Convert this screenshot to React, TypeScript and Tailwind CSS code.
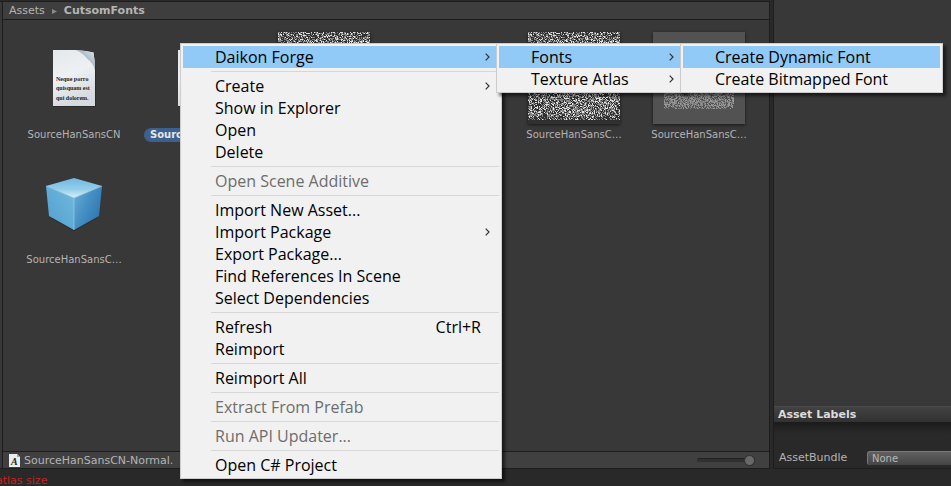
import type { ReactNode } from "react";

type MenuEntry =
  | { label: string; shortcut?: string; submenu?: boolean; disabled?: boolean; active?: boolean }
  | "separator";

const assetMenu: MenuEntry[] = [
  { label: "Daikon Forge", submenu: true, active: true },
  "separator",
  { label: "Create", submenu: true },
  { label: "Show in Explorer" },
  { label: "Open" },
  { label: "Delete" },
  "separator",
  { label: "Open Scene Additive", disabled: true },
  "separator",
  { label: "Import New Asset..." },
  { label: "Import Package", submenu: true },
  { label: "Export Package..." },
  { label: "Find References In Scene" },
  { label: "Select Dependencies" },
  "separator",
  { label: "Refresh", shortcut: "Ctrl+R" },
  { label: "Reimport" },
  "separator",
  { label: "Reimport All" },
  "separator",
  { label: "Extract From Prefab", disabled: true },
  "separator",
  { label: "Run API Updater...", disabled: true },
  "separator",
  { label: "Open C# Project" },
];

const forgeMenu: MenuEntry[] = [
  { label: "Fonts", submenu: true, active: true },
  { label: "Texture Atlas", submenu: true },
];

const fontsMenu: MenuEntry[] = [
  { label: "Create Dynamic Font", active: true },
  { label: "Create Bitmapped Font" },
];

function Chevron() {
  return (
    <svg width="5" height="8" viewBox="0 0 5 8" className="mr-[9px] shrink-0" aria-hidden="true">
      <path d="M0.7 0.7 L4 4 L0.7 7.3" fill="none" stroke="#333" strokeWidth="1.2" />
    </svg>
  );
}

function Menu({ entries, className, name }: { entries: MenuEntry[]; className: string; name: string }) {
  return (
    <div
      role="menu"
      aria-label={name}
      className={`absolute border border-[#cccccc] bg-[#f1f1f1] p-0.5 font-['Open_Sans','Noto_Sans_CJK_SC',sans-serif] text-[16px] text-black shadow-[3px_3px_3px_rgba(0,0,0,0.55)] ${className}`}
    >
      {entries.map((entry, i) =>
        entry === "separator" ? (
          <div key={i} role="separator" className="ml-7 flex h-[7px] items-center">
            <div className="h-px w-full bg-[#d7d7d7]" />
          </div>
        ) : (
          <button
            key={i}
            role="menuitem"
            disabled={entry.disabled}
            className={`flex h-[22px] w-full items-center pl-8 text-left leading-[22px] whitespace-nowrap ${
              entry.active ? "bg-[#91c9f7]" : ""
            } ${entry.disabled ? "text-[#6d6d6d]" : ""}`}
          >
            <span className="flex-1">{entry.label}</span>
            {entry.shortcut && <span className="pr-[18px]">{entry.shortcut}</span>}
            {entry.submenu && <Chevron />}
          </button>
        ),
      )}
    </div>
  );
}

// Glyph atlas preview: seeded speckle so every render is identical.
function specklePath(x0: number, y0: number, x1: number, y1: number, density: number, seed: number) {
  let s = seed;
  let d = "";
  for (let y = y0; y < y1; y++) {
    for (let x = x0; x < x1; x++) {
      s = (s * 1664525 + 1013904223) >>> 0;
      const ragged = y > y1 - 4 && (x * 7 + y * 3) % 11 < 3;
      if (s / 4294967296 < density && !ragged) d += `M${x} ${y}h1v1h-1z`;
    }
  }
  return d;
}

const denseWhite = specklePath(0, 0, 92, 88, 0.2, 11);
const denseGray = specklePath(0, 0, 92, 88, 0.5, 77);
const faintLight = specklePath(11, 12, 81, 77, 0.3, 5);
const faintGray = specklePath(11, 12, 81, 77, 0.6, 29);

function AtlasThumb() {
  return (
    <svg width="92" height="92" viewBox="0 0 92 92" shapeRendering="crispEdges" className="bg-[#303030] shadow-[0_1px_3px_rgba(0,0,0,0.6)]" aria-hidden="true">
      <path d={denseGray} fill="#858585" />
      <path d={denseWhite} fill="#e2e2e2" />
    </svg>
  );
}

function FaintThumb() {
  return (
    <svg width="92" height="92" viewBox="0 0 92 92" shapeRendering="crispEdges" className="bg-[#525252] shadow-[0_1px_3px_rgba(0,0,0,0.6)]" aria-hidden="true">
      <path d={faintGray} fill="#7d7d7d" />
      <path d={faintLight} fill="#999999" />
    </svg>
  );
}

function DocumentThumb() {
  return (
    <svg width="44" height="58" viewBox="0 0 44 58" aria-hidden="true">
      <defs>
        <linearGradient id="paper" x1="0" y1="0" x2="0.3" y2="1">
          <stop offset="0" stopColor="#e3e8ec" />
          <stop offset="0.5" stopColor="#eef1f3" />
          <stop offset="1" stopColor="#d5dade" />
        </linearGradient>
        <linearGradient id="curl" x1="0" y1="1" x2="1" y2="0">
          <stop offset="0.2" stopColor="#e3e8ec" />
          <stop offset="0.55" stopColor="#a9b8c3" />
          <stop offset="1" stopColor="#e4ebef" />
        </linearGradient>
      </defs>
      <path d="M1 3 H42 L44 22 V58 H1 Z" fill="#000" opacity="0.25" />
      <path d="M1 1 H24 Q34 1.5 41.500 3.500 Q43 12 43 21 V57 H1 Z" fill="url(#paper)" />
      <path d="M24 1 Q34 1.5 41.500 3.500 Q43 12 43 21 Q41 14 35 9.500 Q31 4 24 1 Z" fill="url(#curl)" />
      <g fontFamily="Liberation Serif, serif" fontWeight="700" fontSize="6" fill="#222">
        <text x="4" y="32">Neque porro</text>
        <text x="4" y="41">quisquam est</text>
        <text x="4" y="51">qui dolorem.</text>
      </g>
    </svg>
  );
}

function CubeThumb() {
  return (
    <svg width="58" height="56" viewBox="0 0 58 56" aria-hidden="true">
      <defs>
        <linearGradient id="cubeTop" x1="0" y1="0" x2="0" y2="1">
          <stop offset="0" stopColor="#6db9e0" />
          <stop offset="0.55" stopColor="#93cdea" />
          <stop offset="1" stopColor="#d9f0fa" />
        </linearGradient>
        <linearGradient id="cubeLeft" x1="1" y1="0" x2="0" y2="1">
          <stop offset="0" stopColor="#72b9de" />
          <stop offset="1" stopColor="#4f9fcf" />
        </linearGradient>
        <linearGradient id="cubeRight" x1="0" y1="0" x2="1" y2="0.7">
          <stop offset="0" stopColor="#6cb0d6" />
          <stop offset="0.5" stopColor="#4590c3" />
          <stop offset="1" stopColor="#2c74b0" />
        </linearGradient>
      </defs>
      <path d="M4 42 L29 56 L54 42 L29 50 Z" fill="#1d1d1d" opacity="0.5" />
      <path d="M1 11 L29 23 V55 L4 41 Z" fill="url(#cubeLeft)" />
      <path d="M57 11 L29 23 V55 L54 41 Z" fill="url(#cubeRight)" />
      <path d="M1 11 L29 3 L57 11 L29 23 Z" fill="url(#cubeTop)" />
      <path d="M1 11 L29 23 L57 11 M29 23 V55" fill="none" stroke="#a5daf1" strokeWidth="0.8" opacity="0.7" />
    </svg>
  );
}

function Asset({ label, selected, children }: { label: string; selected?: boolean; children: ReactNode }) {
  return (
    <li className="flex w-[94px] flex-col items-center">
      <div className="flex h-[94px] w-full items-center justify-center">{children}</div>
      <span
        className={`mt-[3px] h-[14px] text-[10px] leading-[14px] whitespace-nowrap ${
          selected ? "rounded-full bg-[#3d6091] px-1.5 font-bold text-[#e6e6e6]" : "text-[#b4b4b4]"
        }`}
      >
        {label}
      </span>
    </li>
  );
}

export default function App() {
  return (
    <div className="relative flex h-screen w-full flex-col overflow-hidden bg-[#292929] font-['DejaVu_Sans',sans-serif] text-[11px] text-[#b4b4b4]">
      <div className="flex min-h-0 flex-1">
        <main className="mt-px flex min-w-0 flex-1 flex-col border-y border-r border-[#1d1d1d] bg-[#383838]">
          <div className="ml-0.5 flex min-h-0 flex-1 flex-col border-l border-[#1d1d1d]">
            <nav aria-label="Breadcrumb" className="flex h-[18px] shrink-0 items-center border-b border-[#1d1d1d] bg-[#3e3e3e] pt-0.5 pl-1.5">
              <a href="#assets">Assets</a>
              <svg width="5" height="5" viewBox="0 0 5 5" className="mx-[7px]" aria-hidden="true">
                <path d="M0 0 L5 2.500 L0 5 Z" fill="#8a8a8a" />
              </svg>
              <a href="#fonts" className="font-bold">CutsomFonts</a>
            </nav>
            <ul className="flex flex-1 flex-wrap content-start gap-x-[31px] gap-y-[14px] pt-[11px] pl-6">
              <Asset label="SourceHanSansCN"><DocumentThumb /></Asset>
              <Asset label="SourceHanSans…" selected><DocumentThumb /></Asset>
              <Asset label="SourceHanSansC…"><AtlasThumb /></Asset>
              <Asset label="SourceHanSansC…"><DocumentThumb /></Asset>
              <Asset label="SourceHanSansC…"><AtlasThumb /></Asset>
              <Asset label="SourceHanSansC…"><FaintThumb /></Asset>
              <Asset label="SourceHanSansC…"><CubeThumb /></Asset>
            </ul>
            <div className="flex h-[17px] shrink-0 items-center border-t border-[#1d1d1d] bg-[#404040] pr-3.5 pl-1.5">
              <svg width="11" height="13" viewBox="0 0 11 13" className="mr-1" aria-hidden="true">
                <path d="M0 0 H8 L11 3 V13 H0 Z" fill="#e9edef" />
                <path d="M8 0 L11 3 H8 Z" fill="#9eabb5" />
                <text x="2" y="11" fontFamily="Liberation Serif, serif" fontStyle="italic" fontWeight="700" fontSize="10" fill="#222">A</text>
              </svg>
              <span className="flex-1 pt-0.5">SourceHanSansCN-Normal.</span>
              <input
                type="range"
                aria-label="Icon size"
                min={0}
                max={100}
                defaultValue={100}
                className="h-3 w-[58px] appearance-none bg-transparent [&::-webkit-slider-runnable-track]:h-1 [&::-webkit-slider-runnable-track]:rounded-full [&::-webkit-slider-runnable-track]:border-t [&::-webkit-slider-runnable-track]:border-[#222] [&::-webkit-slider-runnable-track]:bg-[#303030] [&::-webkit-slider-thumb]:-mt-1 [&::-webkit-slider-thumb]:size-[11px] [&::-webkit-slider-thumb]:appearance-none [&::-webkit-slider-thumb]:rounded-full [&::-webkit-slider-thumb]:border [&::-webkit-slider-thumb]:border-[#2e2e2e] [&::-webkit-slider-thumb]:bg-[#686868]"
              />
            </div>
          </div>
        </main>

        <aside className="ml-[3px] flex w-[178px] shrink-0 flex-col border-b border-l border-[#1d1d1d] bg-[#383838]">
          <div className="flex-1" />
          <h2 className="flex h-4 items-center border-t border-[#4a4a4a] bg-linear-to-b from-[#424242] to-[#323232] pt-0.5 pl-1 font-bold text-[#dcdcdc]">
            Asset Labels
          </h2>
          <div className="flex h-[46px] items-end bg-linear-to-b from-[#1b1b1b] via-[#292929] via-25% to-[#292929] pb-[3px] pl-[5px]">
            <label htmlFor="bundle" className="w-[88px] shrink-0 leading-[14px]">AssetBundle</label>
            <select
              id="bundle"
              className="h-[14px] min-w-0 flex-1 appearance-none rounded-l-[3px] border-t border-l border-[#7a7a7a] bg-linear-to-b from-[#606060] to-[#454545] pl-1 text-[10px] leading-3 text-[#b8b8b8]"
            >
              <option>None</option>
            </select>
          </div>
        </aside>
      </div>

      <footer className="h-[17px] shrink-0 overflow-hidden">
        <p role="status" className="-ml-1 pt-[5px] leading-[14px] text-[#c42323]">atlas size</p>
      </footer>

      <Menu name="Assets" entries={assetMenu} className="top-[43px] left-[180px] w-[322px]" />
      <Menu name="Daikon Forge" entries={forgeMenu} className="top-[43px] left-[496px] w-[190px]" />
      <Menu name="Fonts" entries={fontsMenu} className="top-[43px] left-[680px] w-[263px]" />
    </div>
  );
}
